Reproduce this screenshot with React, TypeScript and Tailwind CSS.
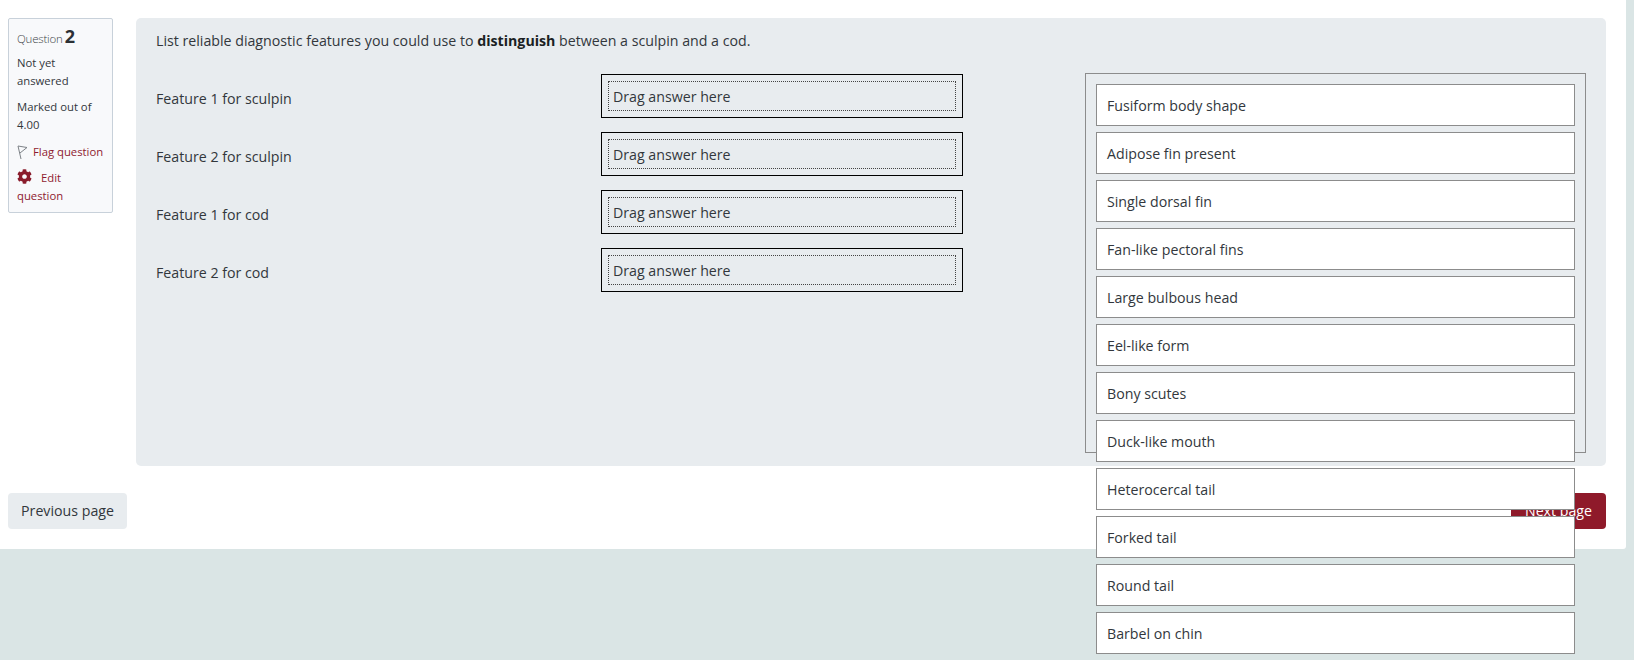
import { FaCog } from "react-icons/fa";

const ROWS = ["Feature 1 for sculpin", "Feature 2 for sculpin", "Feature 1 for cod", "Feature 2 for cod"];

const CHOICES = [
  "Fusiform body shape",
  "Adipose fin present",
  "Single dorsal fin",
  "Fan-like pectoral fins",
  "Large bulbous head",
  "Eel-like form",
  "Bony scutes",
  "Duck-like mouth",
  "Heterocercal tail",
  "Forked tail",
  "Round tail",
  "Barbel on chin",
];

function FlagIcon() {
  return (
    <svg width="11" height="15" viewBox="0 0 11 15" fill="none" stroke="#7d8287" strokeWidth="1">
      <path d="M1 1 L4 14" />
      <path d="M1 1 L10 2.5 L3 8" />
    </svg>
  );
}

export default function App() {
  return (
    <div className="h-[660px] overflow-hidden bg-[#dae5e5] font-['Open_Sans',sans-serif] text-[#32373c]">
      <div className="h-[549px] w-[1626px] rounded-br-[3px] bg-white px-2 pt-[18px]">
        <div className="flex gap-[23px]">
          {/* Question info */}
          <div className="h-[195px] w-[105px] shrink-0 rounded-[2px] border border-[#c8d1da] bg-[#f8f9fb] px-2 pt-1.5 text-[11.3px] leading-[18px]">
            <h3 className="flex items-baseline gap-0.5 font-normal">
              <span className="text-[11.5px] font-light tracking-[-0.2px] text-[#3d4449]">Question</span>
              <span className="text-[18px] font-bold leading-[22px] text-[#2b3035]">2</span>
            </h3>
            <div className="mt-[6px]">Not yet answered</div>
            <div className="mt-[8px]">Marked out of 4.00</div>
            <div className="mt-[9px] flex items-center gap-[5px] whitespace-nowrap text-[#8f1a2f]">
              <FlagIcon />
              <span>Flag question</span>
            </div>
            <div className="mt-2 text-[#8f1a2f]">
              <FaCog className="mr-[9px] inline-block align-[-2px] text-[15px] text-[#8a1c2c]" />
              Edit question
            </div>
          </div>

          {/* Question content */}
          <div className="h-[448px] w-[1470px] shrink-0 rounded-[5px] bg-[#e8ecef] pl-5 pt-3 text-[14.2px]">
            <p className="h-[22px] leading-[22px]">
              List reliable diagnostic features you could use to <b className="text-[#1b1f23]">distinguish</b> between a sculpin and a cod.
            </p>
            <div className="mt-[21px] flex">
              <div className="flex w-[929px] flex-col gap-[14px] pt-px">
                {ROWS.map((label) => (
                  <div key={label} className="flex h-11 items-center">
                    <span className="w-[445px] pt-1.5">{label}</span>
                    <div className="h-11 w-[362px] border border-black p-[6px]">
                      <div className="flex h-[30px] items-center border border-dotted border-[#444] pl-1 pt-0.5 leading-none">
                        Drag answer here
                      </div>
                    </div>
                  </div>
                ))}
              </div>
              <div className="h-[380px] w-[501px] border border-[#8c8c8c] px-[10px] pt-[10px]">
                <div className="relative z-10 flex flex-col gap-[6px]">
                  {CHOICES.map((choice) => (
                    <div key={choice} className="flex h-[42px] shrink-0 items-center border border-[#8c8c8c] bg-white px-[10px] pt-0.5">
                      {choice}
                    </div>
                  ))}
                </div>
              </div>
            </div>
          </div>
        </div>

        {/* Page navigation */}
        <div className="mr-3 mt-[27px] flex justify-between text-[14.2px]">
          <button className="h-9 w-[119px] rounded-[4px] bg-[#e8ecef]">Previous page</button>
          <button className="h-9 w-[95px] rounded-[4px] bg-[#8f1a2a] text-white">Next page</button>
        </div>
      </div>
    </div>
  );
}
